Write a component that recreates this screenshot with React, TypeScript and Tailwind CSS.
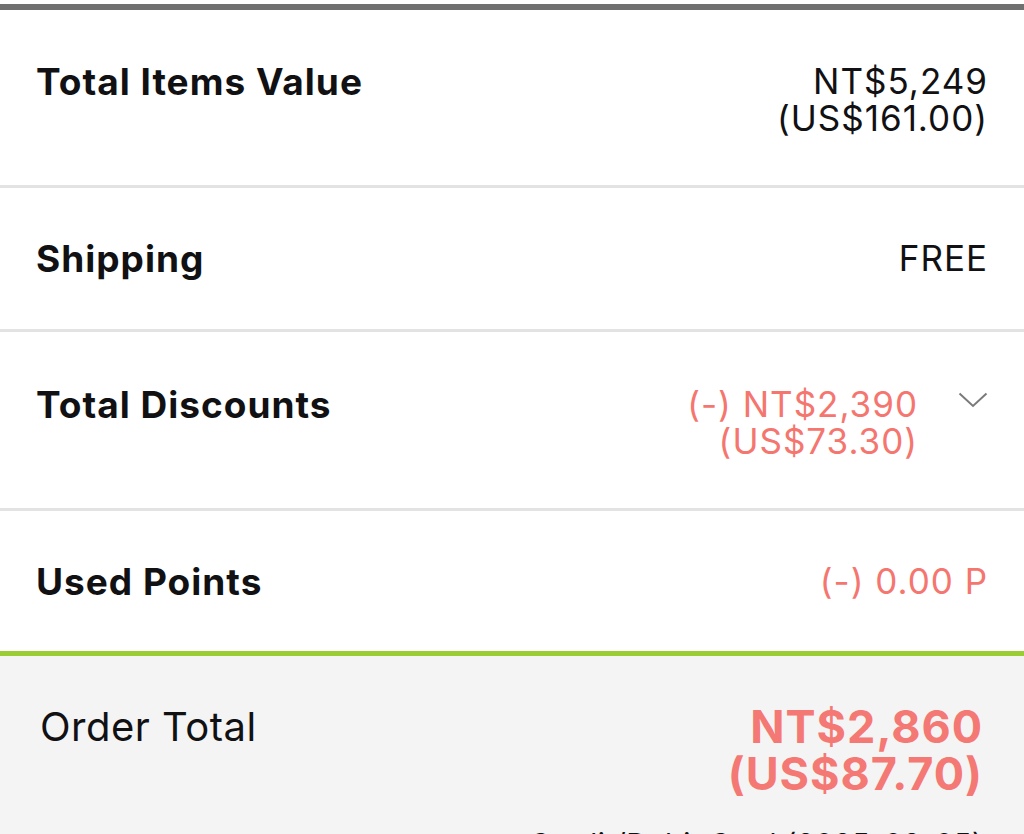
export default function App(): JSX.Element {
  return (
    <div
      className="h-[834px] w-[1024px] overflow-hidden bg-white text-[#111114] pt-[4px]"
      style={{ fontFamily: "Inter, 'Noto Sans', sans-serif" }}
    >
      <div className="h-[6px] bg-[#707070]" />

      <div className="flex items-start justify-between pl-[36px] pr-[36px] pt-[53px] pb-[48px] leading-[37px]">
        <p className="text-[37px] font-bold tracking-[1px]">Total Items Value</p>
        <div className="text-right text-[35px] tracking-[1px]">
          <p>NT$5,249</p>
          <p>(US$161.00)</p>
        </div>
      </div>
      <div className="h-[3px] bg-[#e3e3e3]" />

      <div className="flex items-center justify-between px-[36px] py-[52px] leading-[37px]">
        <p className="text-[37px] font-bold tracking-[1px]">Shipping</p>
        <p className="text-[35px] tracking-[1px]">FREE</p>
      </div>
      <div className="h-[3px] bg-[#e3e3e3]" />

      <div className="flex items-start justify-between pl-[36px] pr-[36px] pt-[54px] pb-[48px] leading-[37px]">
        <p className="text-[37px] font-bold tracking-[1px]">Total Discounts</p>
        <div className="flex items-start">
          <div className="text-right text-[35px] tracking-[1px] text-[#f4766f]">
            <p>(-) NT$2,390</p>
            <p>(US$73.30)</p>
          </div>
          <svg
            className="ml-[40px] mt-[6px]"
            width="30"
            height="16"
            viewBox="0 0 30 16"
            fill="none"
          >
            <path d="M1.5 1.5 L15 14 L28.5 1.5" stroke="#7a7a7a" strokeWidth="2" />
          </svg>
        </div>
      </div>
      <div className="h-[3px] bg-[#e3e3e3]" />

      <div className="flex items-center justify-between px-[36px] pt-[52px] pb-[51px] leading-[37px]">
        <p className="text-[37px] font-bold tracking-[1px]">Used Points</p>
        <p className="text-[35px] tracking-[1px] text-[#f4766f]">(-) 0.00 P</p>
      </div>

      <div className="h-[5px] bg-[#9acd32]" />

      <div className="bg-[#f4f4f4] pl-[40px] pr-[41px] pt-[47px] pb-[40px]">
        <div className="flex items-start justify-between">
          <p className="text-[40px] leading-[47px] tracking-[0.5px]">Order Total</p>
          <div className="text-right text-[45px] font-bold leading-[47px] tracking-[1px] text-[#f47873]">
            <p>NT$2,860</p>
            <p>(US$87.70)</p>
          </div>
        </div>
        <p className="mt-[29px] text-right text-[29px] leading-[36px] tracking-[0.5px]">
          Credit/Debit Card (2025-03-05)
        </p>
      </div>
    </div>
  );
}
